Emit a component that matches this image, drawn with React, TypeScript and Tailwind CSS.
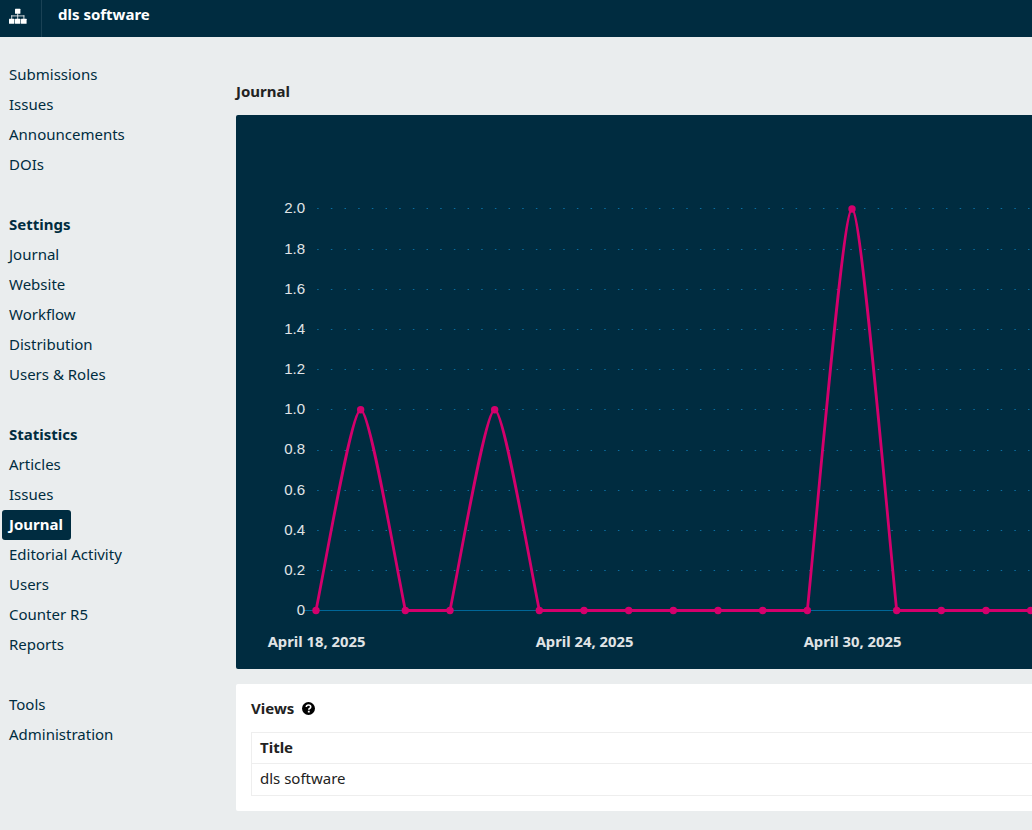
const data = [0, 1, 0, 0, 1, 0, 0, 0, 0, 0, 0, 0, 2, 0, 0, 0, 0];
const X0 = 316;
const STEP = 44.667;
const Y0 = 610.5;
const PER = 200.75;
const pts = data.map((v, i) => ({ x: X0 + i * STEP, y: Y0 - v * PER }));

function curve() {
  let d = `M${pts[0].x} ${pts[0].y}`;
  for (let i = 1; i < pts.length; i++) {
    const a = pts[i - 1];
    const b = pts[i];
    if (a.y === b.y) {
      d += ` L${b.x} ${b.y}`;
    } else if (a.y > b.y) {
      const h = a.y - b.y;
      d += ` C${a.x + 12} ${a.y - 0.3 * h} ${b.x - 9} ${b.y} ${b.x} ${b.y}`;
    } else {
      const h = b.y - a.y;
      d += ` C${a.x + 9} ${a.y} ${b.x - 12} ${b.y - 0.3 * h} ${b.x} ${b.y}`;
    }
  }
  return d;
}

const ticks = ["2.0", "1.8", "1.6", "1.4", "1.2", "1.0", "0.8", "0.6", "0.4", "0.2"];

function Chart() {
  return (
    <svg viewBox="236 115 850 554" className="block h-[554px] w-[850px]">
      {ticks.map((t, i) => {
        const y = 208.5 + i * 40.15;
        const gy = i === 0 ? 208.5 : Math.floor(y + 0.6) + 0.5;
        return (
          <g key={t}>
            <line x1="303.5" x2="1086" y1={gy} y2={gy} stroke="#0b6ea0" strokeWidth="1" strokeDasharray="1.5 12.17" />
            <text x="305" y={i === 0 ? 213 : y + 5} textAnchor="end" fill="#e0e4e6" fontSize="15" fontFamily="'Liberation Sans', sans-serif">{t}</text>
          </g>
        );
      })}
      <line x1="304" x2="1086" y1="610.5" y2="610.5" stroke="#006798" strokeWidth="1" />
      <text x="305" y="615" textAnchor="end" fill="#e0e4e6" fontSize="15" fontFamily="'Liberation Sans', sans-serif">0</text>
      <path d={curve()} fill="none" stroke="#d4006c" strokeWidth="2.8" />
      {pts.map((p) => (
        <circle key={p.x} cx={p.x} cy={p.y} r="3.7" fill="#d4006c" />
      ))}
      {([["April 18, 2025", 316.5], ["April 24, 2025", 584.5], ["April 30, 2025", 852.5]] as [string, number][]).map(([l, x]) => (
        <text key={l} x={x} y="647" textAnchor="middle" fill="#e0e4e6" fontSize="14.8" fontWeight="700" fontFamily="'Noto Sans', sans-serif">{l}</text>
      ))}
    </svg>
  );
}

function SitemapIcon() {
  return (
    <svg viewBox="0 0 18 16" className="h-[16px] w-[18px] fill-white">
      <rect x="6" y="0.8" width="5.4" height="5" rx="0.5" />
      <rect x="0" y="10.8" width="5.4" height="5" rx="0.5" />
      <rect x="6" y="10.8" width="5.4" height="5" rx="0.5" />
      <rect x="12" y="10.8" width="5.6" height="5" rx="0.5" />
      <rect x="8.2" y="5.5" width="1" height="5.5" opacity="0.8" />
      <rect x="2.2" y="7.4" width="13.2" height="1" opacity="0.8" />
      <rect x="2.2" y="7.4" width="1" height="3.6" opacity="0.8" />
      <rect x="14.4" y="7.4" width="1" height="3.6" opacity="0.8" />
    </svg>
  );
}

function HelpIcon() {
  return (
    <svg viewBox="0 0 14 14" className="h-[13px] w-[13px]">
      <circle cx="7" cy="7" r="7" fill="#000" />
      <path d="M4.6 5.4C4.7 4 5.7 3.3 7 3.3c1.4 0 2.4.8 2.4 2 0 1.8-2.1 1.6-2.1 3" fill="none" stroke="#fff" strokeWidth="1.7" />
      <rect x="6.3" y="9.4" width="2" height="1.9" fill="#fff" />
    </svg>
  );
}

const groups: { title?: string; items: string[] }[] = [
  { items: ["Submissions", "Issues", "Announcements", "DOIs"] },
  { title: "Settings", items: ["Journal", "Website", "Workflow", "Distribution", "Users & Roles"] },
  { title: "Statistics", items: ["Articles", "Issues", "Journal", "Editorial Activity", "Users", "Counter R5", "Reports"] },
  { items: ["Tools", "Administration"] },
];

export default function App() {
  return (
    <div className="h-[830px] w-[1032px] overflow-hidden bg-[#eaedee] font-['Noto_Sans',sans-serif] text-[15px] text-[#222]">
      <header className="flex h-[37px] bg-[#002c40] text-white">
        <div className="flex w-[42px] items-center border-r border-[#1a4255] pb-[6px] pl-[9px]">
          <SitemapIcon />
        </div>
        <div className="pl-[16px] font-bold leading-[29px]">dls software</div>
      </header>
      <div className="flex">
        <nav className="flex w-[236px] shrink-0 flex-col gap-[30px] pt-[23px] pl-[2px]">
          {groups.map((g, gi) => (
            <div key={gi}>
              {g.title && <div className="h-[30px] pl-[7px] font-bold leading-[28px] text-[#002c40]">{g.title}</div>}
              {g.items.map((it) => {
                const active = g.title === "Statistics" && it === "Journal";
                return (
                  <div
                    key={it}
                    className={
                      active
                        ? "h-[30px] w-fit rounded-[3px] bg-[#002c40] pr-[8px] pl-[7px] font-bold leading-[28px] text-white"
                        : "h-[30px] px-[7px] leading-[28px] text-[#002c40]"
                    }
                  >
                    {it}
                  </div>
                );
              })}
            </div>
          ))}
        </nav>
        <main className="w-[850px] shrink-0">
          <h1 className="h-[78px] pt-[44px] font-bold leading-[20px] text-[#222]">Journal</h1>
          <section className="h-[554px] overflow-hidden rounded-[2px] bg-[#002c40]">
            <Chart />
          </section>
          <section className="mt-[15px] h-[127px] rounded-[2px] bg-white p-[15px]">
            <div className="flex h-[18px] items-center gap-[8px] font-bold leading-[18px]">
              Views <HelpIcon />
            </div>
            <table className="mt-[15px] w-full border-collapse">
              <tbody>
                <tr className="h-[31px]">
                  <th className="border border-[#eee] pr-[8px] pb-[2px] pl-[8px] text-left font-bold">Title</th>
                </tr>
                <tr className="h-[32px]">
                  <td className="border border-[#eee] pr-[8px] pb-[2px] pl-[8px] text-left">dls software</td>
                </tr>
              </tbody>
            </table>
          </section>
        </main>
      </div>
    </div>
  );
}
